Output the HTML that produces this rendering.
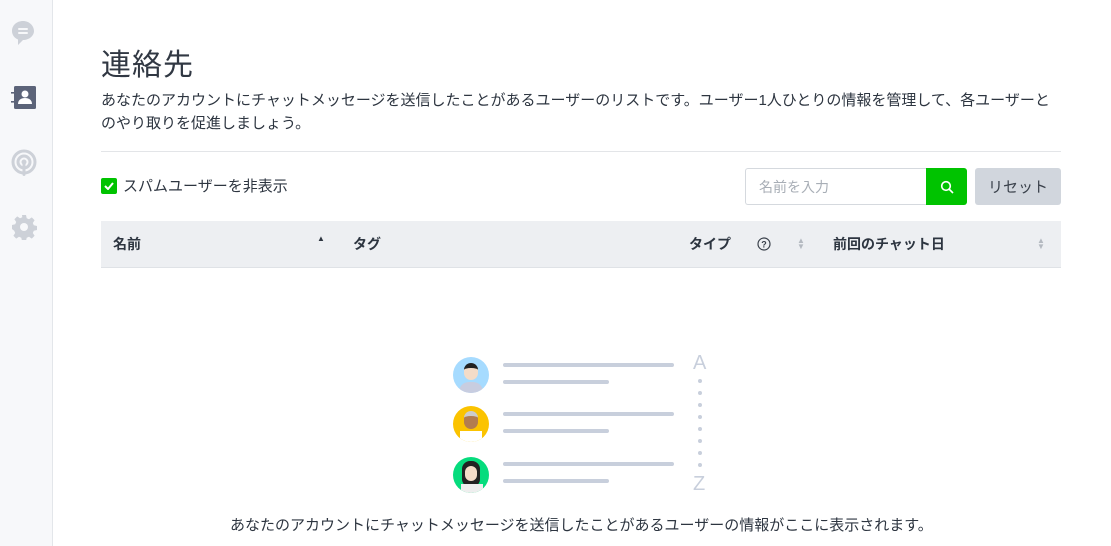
<!DOCTYPE html>
<html><head><meta charset="utf-8"><style>
*{margin:0;padding:0;box-sizing:border-box}
body{width:1111px;height:546px;overflow:hidden;background:#fff;font-family:"Liberation Sans","Noto Sans CJK JP",sans-serif;color:#2d3540;position:relative}
.side{position:absolute;left:0;top:0;width:53px;height:546px;background:#f7f8fa;border-right:1px solid #e3e6ea}
.ic{position:absolute;left:11px}
.main{position:absolute;left:101px;top:0;width:960px}
h1{position:absolute;top:40px;font-size:30px;font-weight:400;color:#313843;letter-spacing:1px}
.desc{position:absolute;top:89px;font-size:15px;line-height:23px;color:#2d3540;width:990px;white-space:nowrap}
.hr{position:absolute;top:151px;left:0;width:960px;height:1px;background:#e3e5e8}
.cb{position:absolute;top:175px;left:0;font-size:15px;display:flex;align-items:center}
.cb i{width:16px;height:16px;background:#00c300;border-radius:2px;margin-right:6px;display:inline-flex;align-items:center;justify-content:center}
.inp{position:absolute;left:644px;top:168px;width:182px;height:37px;border:1px solid #d5d9de;border-right:none;border-radius:3px 0 0 3px;font-size:14px;color:#a8aeb6;padding:8px 13px}
.sb{position:absolute;left:825px;top:168px;width:41px;height:37px;background:#00c300;border-radius:0 3px 3px 0;display:flex;align-items:center;justify-content:center}
.rs{position:absolute;left:874px;top:168px;width:86px;height:37px;background:#d1d6dd;border-radius:3px;font-size:15px;color:#3a414b;display:flex;align-items:center;justify-content:center}
.th{position:absolute;top:221px;left:0;width:960px;height:47px;background:#edeff2;border-bottom:1px solid #dfe2e6;font-size:14px;font-weight:700;color:#2d3540}
.th span{position:absolute;top:13px}
.arr{position:absolute;top:17px;font-size:8px;color:#b4b9c0;line-height:6px}
.ill{position:absolute;left:452px;top:355px}
.bar{position:absolute;height:4px;border-radius:2px;background:#c8cfdc}
.av{position:absolute;width:36px;height:36px;border-radius:50%;overflow:hidden}
.dot{position:absolute;left:246px;width:4px;height:4px;border-radius:50%;background:#c8cfdc}
.az{position:absolute;left:241px;font-size:20px;color:#c8cfdc}
.foot{position:absolute;top:514px;left:230px;font-size:15px;color:#2d3540;white-space:nowrap}
</style></head><body>
<div class="side">
<svg class="ic" style="top:20px" width="24" height="26" viewBox="0 0 24 26"><path d="M12 1C5.5 1 1 5.5 1 11c0 4 2.5 7 6 8.5V25l5-5c6 0 11-4 11-9S18.5 1 12 1z" fill="#cdd1d8"/><rect x="7" y="8" width="10" height="2" rx="1" fill="#f7f8fa"/><rect x="7" y="12" width="10" height="2" rx="1" fill="#f7f8fa"/></svg>
<svg class="ic" style="top:85px" width="26" height="26" viewBox="0 0 26 26"><rect x="3" y="1" width="22" height="23" rx="1.5" fill="#5c6479"/><rect x="0" y="7" width="5" height="1.6" fill="#5c6479"/><rect x="0" y="16" width="5" height="1.6" fill="#5c6479"/><circle cx="14" cy="9" r="3.5" fill="#fff"/><path d="M7 19c0-4 3-6 7-6s7 2 7 6z" fill="#fff"/></svg>
<svg class="ic" style="top:149px" width="26" height="28" viewBox="0 0 26 28"><circle cx="13" cy="13" r="11" fill="none" stroke="#cdd1d8" stroke-width="3"/><circle cx="13" cy="13" r="6" fill="none" stroke="#cdd1d8" stroke-width="3"/><circle cx="13" cy="13" r="2.5" fill="#cdd1d8"/><rect x="11.5" y="13" width="3" height="14" rx="1.5" fill="#cdd1d8"/></svg>
<svg class="ic" style="top:214px" width="26" height="26" viewBox="0 0 26 26"><path d="M11 1h4l.7 3.2 2.3 1 2.8-1.8 2.8 2.8-1.8 2.8 1 2.3 3.2.7v4l-3.2.7-1 2.3 1.8 2.8-2.8 2.8-2.8-1.8-2.3 1-.7 3.2h-4l-.7-3.2-2.3-1-2.8 1.8-2.8-2.8 1.8-2.8-1-2.3L1 15v-4l3.2-.7 1-2.3-1.8-2.8 2.8-2.8 2.8 1.8 2.3-1z" fill="#cdd1d8"/><circle cx="13" cy="13" r="4" fill="#f7f8fa"/></svg>
</div>
<div class="main">
<h1>連絡先</h1>
<div class="desc">あなたのアカウントにチャットメッセージを送信したことがあるユーザーのリストです。ユーザー1人ひとりの情報を管理して、各ユーザーと<br>のやり取りを促進しましょう。</div>
<div class="hr"></div>
<div class="cb"><i><svg width="10" height="8" viewBox="0 0 10 8"><path d="M1 4l3 3 5-6" stroke="#fff" stroke-width="2" fill="none"/></svg></i>スパムユーザーを非表示</div>
<div class="inp">名前を入力</div>
<div class="sb"><svg width="14" height="14" viewBox="0 0 14 14"><circle cx="6" cy="6" r="4.3" stroke="#fff" stroke-width="1.6" fill="none"/><path d="M9 9l4 4" stroke="#fff" stroke-width="1.6"/></svg></div>
<div class="rs">リセット</div>
<div class="th">
<span style="left:12px">名前</span><span style="left:216px;top:13px;font-size:8px;color:#2d3540">▲</span>
<span style="left:252px">タグ</span>
<span style="left:588px">タイプ</span>
<svg style="position:absolute;left:656px;top:16px" width="14" height="14" viewBox="0 0 14 14"><circle cx="7" cy="7" r="6" fill="none" stroke="#3a414b" stroke-width="1.2"/><text x="7" y="10.5" font-size="9" text-anchor="middle" fill="#3a414b" font-family="Liberation Sans">?</text></svg>
<div class="arr" style="left:696px">▲<br>▼</div>
<span style="left:732px">前回のチャット日</span>
<div class="arr" style="left:936px">▲<br>▼</div>
</div>
</div>
<div class="ill">
<div class="av" style="left:1px;top:2px;background:#a6dbff"><div style="position:absolute;left:11px;top:6px;width:14px;height:17px;border-radius:7px;background:#f4dcc8;border-top:5px solid #222"></div><div style="position:absolute;left:6px;top:25px;width:24px;height:12px;border-radius:10px 10px 0 0;background:#c8cde0"></div></div>
<div class="av" style="left:1px;top:51px;background:#fbc300"><div style="position:absolute;left:11px;top:5px;width:14px;height:18px;border-radius:7px;background:#b27c4f;border-top:5px solid #ccc"></div><div style="position:absolute;left:7px;top:25px;width:22px;height:12px;background:#fff"></div></div>
<div class="av" style="left:1px;top:102px;background:#06dc7d"><div style="position:absolute;left:9px;top:4px;width:18px;height:26px;border-radius:8px;background:#222"></div><div style="position:absolute;left:12px;top:9px;width:12px;height:15px;border-radius:6px;background:#f4dcc8"></div><div style="position:absolute;left:8px;top:27px;width:22px;height:12px;background:#eee"></div></div>
<div class="bar" style="left:51px;top:8px;width:171px"></div>
<div class="bar" style="left:51px;top:25px;width:106px"></div>
<div class="bar" style="left:51px;top:57px;width:171px"></div>
<div class="bar" style="left:51px;top:74px;width:106px"></div>
<div class="bar" style="left:51px;top:107px;width:171px"></div>
<div class="bar" style="left:51px;top:124px;width:106px"></div>
<div class="az" style="top:-3px">A</div>
<div class="dot" style="top:24px"></div><div class="dot" style="top:36px"></div><div class="dot" style="top:48px"></div><div class="dot" style="top:60px"></div><div class="dot" style="top:72px"></div><div class="dot" style="top:84px"></div><div class="dot" style="top:96px"></div><div class="dot" style="top:108px"></div>
<div class="az" style="top:118px">Z</div>
</div>
<div class="foot">あなたのアカウントにチャットメッセージを送信したことがあるユーザーの情報がここに表示されます。</div>
</body></html>
